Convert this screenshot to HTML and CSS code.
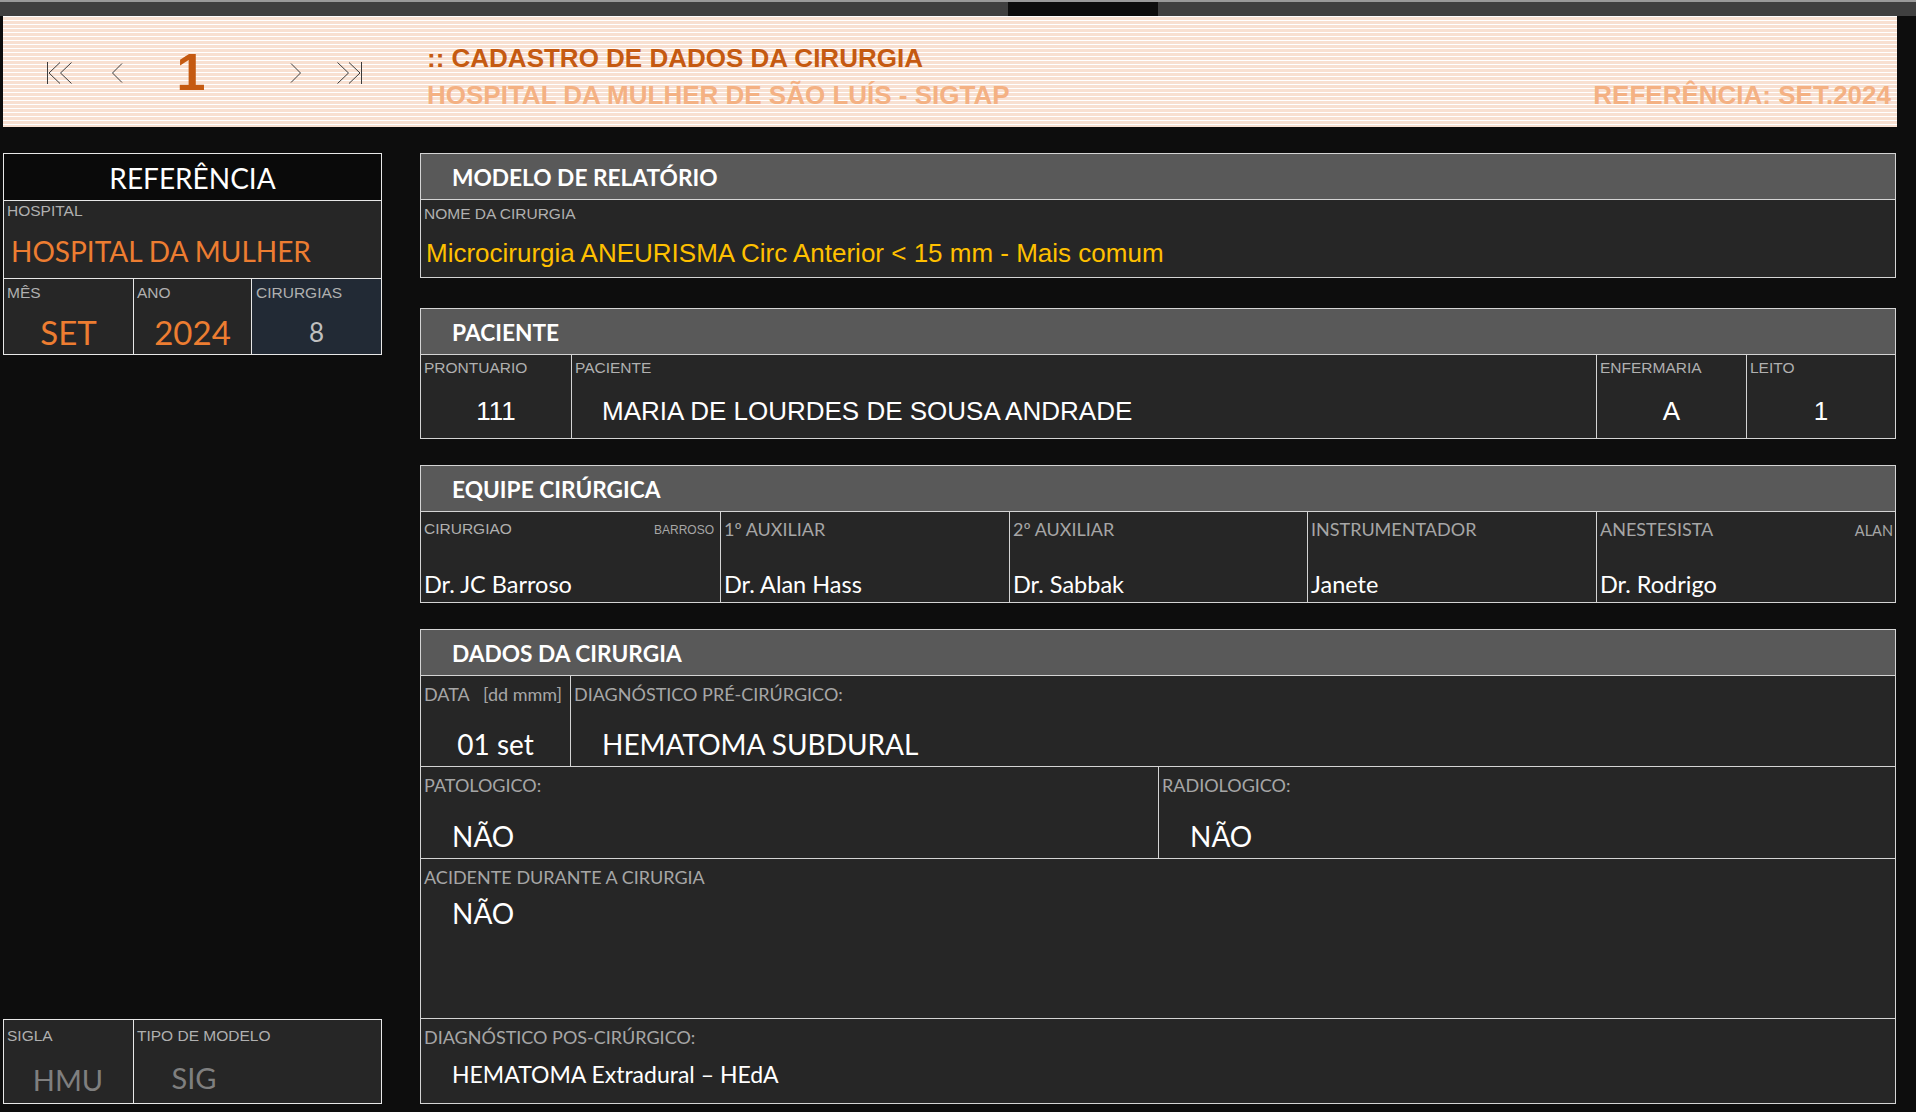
FILE: index.html
```html
<!DOCTYPE html>
<html lang="pt-BR">
<head>
<meta charset="utf-8">
<title>Cadastro de Dados da Cirurgia</title>
<link rel="stylesheet" href="styles.css">
</head>
<body>
<div class="topbar"><div class="tb-fill tb-a"></div><div class="tb-gap"></div><div class="tb-fill"></div></div>

<header class="banner">
  <nav class="pager">
    <svg class="ic ic-first" width="27" height="22" viewBox="0 0 27 22"><path d="M1.5 0V22M14 0.5L3 11L14 21.5M25.5 0.5L14.5 11L25.5 21.5" fill="none" stroke="#3c3c3c" stroke-width="1"/></svg>
    <svg class="ic ic-prev" width="12" height="20" viewBox="0 0 12 20"><path d="M11 0.5L1.5 10L11 19.5" fill="none" stroke="#3c3c3c" stroke-width="1"/></svg>
    <span class="page-num">1</span>
    <svg class="ic ic-next" width="12" height="20" viewBox="0 0 12 20"><path d="M1 0.5L10.5 10L1 19.5" fill="none" stroke="#3c3c3c" stroke-width="1"/></svg>
    <svg class="ic ic-last" width="27" height="22" viewBox="0 0 27 22"><path d="M25.5 0V22M13 0.5L24 11L13 21.5M1.5 0.5L12.5 11L1.5 21.5" fill="none" stroke="#3c3c3c" stroke-width="1"/></svg>
  </nav>
  <div class="titles">
    <div class="t1">:: CADASTRO DE DADOS DA CIRURGIA</div>
    <div class="t2row"><span class="t2">HOSPITAL DA MULHER DE SÃO LUÍS - SIGTAP</span><span class="t2">REFERÊNCIA: SET.2024</span></div>
  </div>
</header>

<div class="layout">
  <aside class="side">
    <div class="ref">
      <div class="ref-head">REFERÊNCIA</div>
      <div class="ref-hosp">
        <div class="lbl-a">HOSPITAL</div>
        <div class="hosp-val">HOSPITAL DA MULHER</div>
      </div>
      <div class="ref-row">
        <div class="rcell rc-mes"><div class="lbl-a">MÊS</div><div class="big-val">SET</div></div>
        <div class="rcell rc-ano"><div class="lbl-a">ANO</div><div class="big-val">2024</div></div>
        <div class="rcell rc-cir"><div class="lbl-a">CIRURGIAS</div><div class="cnt-val">8</div></div>
      </div>
    </div>
    <div class="sig">
      <div class="scell sc-sigla"><div class="lbl-a">SIGLA</div><div class="sig-val">HMU</div></div>
      <div class="scell sc-tipo"><div class="lbl-a">TIPO DE MODELO</div><div class="sig-val sig-tipo">SIG</div></div>
    </div>
  </aside>

  <main class="main">
    <section class="sec sec-modelo">
      <div class="sec-head">MODELO DE RELATÓRIO</div>
      <div class="row row-modelo">
        <div class="cell cell-full">
          <div class="lbl-a">NOME DA CIRURGIA</div>
          <div class="val-arial val-yellow">Microcirurgia ANEURISMA Circ Anterior &lt; 15 mm - Mais comum</div>
        </div>
      </div>
    </section>

    <section class="sec sec-pac">
      <div class="sec-head">PACIENTE</div>
      <div class="row row-pac">
        <div class="cell c-pront"><div class="lbl-a">PRONTUARIO</div><div class="val-arial val-pac center">111</div></div>
        <div class="cell c-nome"><div class="lbl-a">PACIENTE</div><div class="val-arial val-pac indent">MARIA DE LOURDES DE SOUSA ANDRADE</div></div>
        <div class="cell c-enf"><div class="lbl-a">ENFERMARIA</div><div class="val-arial val-pac center">A</div></div>
        <div class="cell c-leito"><div class="lbl-a">LEITO</div><div class="val-arial val-pac center">1</div></div>
      </div>
    </section>

    <section class="sec sec-equipe">
      <div class="sec-head">EQUIPE CIRÚRGICA</div>
      <div class="row row-equipe">
        <div class="cell c-eq c-eq1"><div class="lbl-line"><span class="lbl-a">CIRURGIAO</span><span class="tag-a">BARROSO</span></div><div class="val-eq">Dr. JC Barroso</div></div>
        <div class="cell c-eq c-eq2"><div class="lbl-line"><span class="lbl-c">1º AUXILIAR</span></div><div class="val-eq">Dr. Alan Hass</div></div>
        <div class="cell c-eq c-eq3"><div class="lbl-line"><span class="lbl-c">2º AUXILIAR</span></div><div class="val-eq">Dr. Sabbak</div></div>
        <div class="cell c-eq c-eq4"><div class="lbl-line"><span class="lbl-c">INSTRUMENTADOR</span></div><div class="val-eq">Janete</div></div>
        <div class="cell c-eq c-eq5"><div class="lbl-line"><span class="lbl-c">ANESTESISTA</span><span class="tag-c">ALAN</span></div><div class="val-eq">Dr. Rodrigo</div></div>
      </div>
    </section>

    <section class="sec sec-dados">
      <div class="sec-head">DADOS DA CIRURGIA</div>
      <div class="row row-d1">
        <div class="cell c-data"><div class="lbl-c">DATA&nbsp;&nbsp; [dd mmm]</div><div class="val-big center">01 set</div></div>
        <div class="cell c-diag"><div class="lbl-c">DIAGNÓSTICO PRÉ-CIRÚRGICO:</div><div class="val-big indent2">HEMATOMA SUBDURAL</div></div>
      </div>
      <div class="row row-d2">
        <div class="cell c-pato"><div class="lbl-c">PATOLOGICO:</div><div class="val-big indent2">NÃO</div></div>
        <div class="cell c-radio"><div class="lbl-c">RADIOLOGICO:</div><div class="val-big indent2">NÃO</div></div>
      </div>
      <div class="row row-d3">
        <div class="cell cell-full"><div class="lbl-c">ACIDENTE DURANTE A CIRURGIA</div><div class="val-big val-acid indent2">NÃO</div></div>
      </div>
      <div class="row row-d4">
        <div class="cell cell-full"><div class="lbl-c">DIAGNÓSTICO POS-CIRÚRGICO:</div><div class="val-pos indent2">HEMATOMA Extradural – HEdA</div></div>
      </div>
    </section>
  </main>
</div>
</body>
</html>
```

FILE: styles.css
```css
* { box-sizing: border-box; }

body {
  margin: 0;
  width: 1916px;
  height: 1112px;
  overflow: hidden;
  background: #0d0d0d;
  font-family: "Liberation Sans", Arial, sans-serif;
  color: #ffffff;
}

/* ---------- top strip ---------- */
.topbar {
  display: flex;
  height: 16px;
  border-top: 2px solid #9a9a9a;
}
.tb-fill { flex: 1; background: #404040; }
.tb-a { flex: 0 0 1008px; }
.tb-gap { flex: 0 0 150px; background: #0d0d0d; }

/* ---------- banner ---------- */
.banner {
  display: flex;
  align-items: flex-start;
  margin-left: 3px;
  width: 1894px;
  height: 111px;
  background: repeating-linear-gradient(180deg, #ffffff 0px, #ffffff 1.5px, #f8e0d1 1.5px, #f8e0d1 4px);
  padding-left: 43px;
}
.pager {
  display: flex;
  align-items: center;
  height: 111px;
}
.ic { display: block; }
.ic-first { margin-top: 2px; }
.ic-prev { margin-left: 38px; margin-top: 3px; }
.page-num {
  width: 60px;
  margin-left: 38px;
  text-align: center;
  font-family: "Liberation Sans", Arial, sans-serif;
  font-weight: bold;
  font-size: 52px;
  line-height: 52px;
  color: #c55a11;
}
.ic-next { margin-left: 69px; margin-top: 3px; }
.ic-last { margin-left: 34px; margin-top: 2px; }

.titles {
  flex: 1;
  margin-left: 64px;
  padding-top: 24px;
  padding-right: 6px;
  font-family: "Liberation Sans", Arial, sans-serif;
  font-weight: bold;
  font-size: 26px;
  line-height: 37px;
  white-space: nowrap;
}
.t1 { color: #c55a11; }
.t2row { display: flex; justify-content: space-between; align-items: baseline; }
.t2 { color: #f4b183; }

/* ---------- main layout ---------- */
.layout {
  display: flex;
  gap: 38px;
  margin-top: 26px;
  padding-left: 3px;
}

/* side */
.side {
  width: 379px;
  display: flex;
  flex-direction: column;
  justify-content: space-between;
}
.ref { border: 1px solid #e8e8e8; }
.ref-head {
  height: 47px;
  border-bottom: 1px solid #e8e8e8;
  background: #0a0a0a;
  display: flex;
  align-items: center;
  justify-content: center;
  font-family: Lato, "Open Sans", sans-serif;
  font-size: 28px;
  color: #ffffff;
  padding-top: 1px;
}
.lbl-a {
  font-family: "Liberation Sans", Arial, sans-serif;
  font-size: 15.5px;
  line-height: 15px;
  color: #b0b0b0;
  white-space: nowrap;
}
.ref-hosp {
  height: 78px;
  background: #262626;
  border-bottom: 1px solid #e8e8e8;
  padding: 2px 0 0 3px;
}
.hosp-val {
  margin-top: 19px;
  padding-left: 4px;
  font-family: Lato, "Open Sans", sans-serif;
  font-size: 28px;
  line-height: 29px;
  color: #ed7d31;
}
.ref-row {
  display: flex;
  height: 75px;
}
.rcell {
  background: #262626;
  padding: 6px 0 0 3px;
}
.rc-mes { width: 130px; border-right: 1px solid #e8e8e8; }
.rc-ano { width: 118px; border-right: 1px solid #e8e8e8; }
.rc-cir { flex: 1; background: #222a35; padding-left: 4px; }
.big-val {
  margin-top: 16px;
  text-align: center;
  padding-right: 3px;
  font-family: Lato, "Open Sans", sans-serif;
  font-size: 33px;
  line-height: 33px;
  color: #ed7d31;
}
.cnt-val {
  margin-top: 19px;
  text-align: center;
  padding-right: 4px;
  font-family: Lato, "Open Sans", sans-serif;
  font-size: 26px;
  line-height: 26px;
  color: #bfbfbf;
}
.sig {
  display: flex;
  height: 85px;
  border: 1px solid #e8e8e8;
  background: #262626;
}
.scell { padding: 8px 0 0 3px; }
.sc-sigla { width: 130px; border-right: 1px solid #e8e8e8; }
.sc-tipo { flex: 1; }
.sig-val {
  margin-top: 22px;
  text-align: center;
  padding-right: 4px;
  font-family: Lato, "Open Sans", sans-serif;
  font-size: 29px;
  line-height: 29px;
  color: #7f7f7f;
}
.sig-tipo { width: 118px; margin-top: 20px; }

/* main */
.main {
  width: 1476px;
  display: flex;
  flex-direction: column;
}
.sec {
  border: 1px solid #d4d4d4;
  background: #262626;
}
.sec-pac { margin-top: 30px; }
.sec-equipe { margin-top: 26px; }
.sec-dados { margin-top: 26px; }
.sec-head {
  height: 46px;
  background: #595959;
  border-bottom: 1px solid #d4d4d4;
  display: flex;
  align-items: center;
  padding-left: 31px;
  padding-top: 1px;
  font-family: Lato, "Open Sans", sans-serif;
  font-weight: bold;
  font-size: 22.7px;
  color: #ffffff;
}
.row { display: flex; }
.cell { padding: 6px 0 0 3px; }
.cell-full { flex: 1; }
.row-modelo { height: 77px; }
.row-pac { height: 83px; }
.row-pac .cell { padding-top: 5px; }
.row-equipe { height: 90px; }
.c-pront { width: 151px; border-right: 1px solid #d4d4d4; }
.c-nome { width: 1025px; border-right: 1px solid #d4d4d4; }
.c-enf { width: 150px; border-right: 1px solid #d4d4d4; }
.c-leito { flex: 1; }

.val-arial {
  font-family: "Liberation Sans", Arial, sans-serif;
  white-space: nowrap;
}
.val-yellow {
  margin-top: 19px;
  padding-left: 2px;
  font-size: 26px;
  line-height: 26px;
  color: #ffc000;
}
.val-pac {
  margin-top: 23px;
  font-size: 26px;
  line-height: 26px;
  color: #ffffff;
}
.center { text-align: center; padding-right: 3px; }
.indent { padding-left: 27px; }

.lbl-c {
  font-family: Lato, "Open Sans", sans-serif;
  font-size: 18px;
  line-height: 18px;
  color: #a6a6a6;
  white-space: nowrap;
}
.c-eq { padding-top: 8px; border-right: 1px solid #d4d4d4; }
.c-eq1 { width: 300px; padding-right: 6px; }
.c-eq2 { width: 289px; }
.c-eq3 { width: 298px; }
.c-eq4 { width: 289px; }
.c-eq5 { flex: 1; border-right: 0; padding-right: 2px; }
.lbl-line {
  display: flex;
  justify-content: space-between;
  align-items: baseline;
  height: 18px;
  line-height: 18px;
}
.lbl-line .lbl-a { line-height: 18px; }
.tag-a {
  font-family: "Liberation Sans", Arial, sans-serif;
  font-size: 12px;
  color: #a6a6a6;
}
.tag-c {
  font-family: Lato, "Open Sans", sans-serif;
  font-size: 14.5px;
  color: #a6a6a6;
}
.val-eq {
  margin-top: 34px;
  font-family: Lato, "Open Sans", sans-serif;
  font-size: 23.5px;
  line-height: 24px;
  color: #ffffff;
  white-space: nowrap;
}

.row-d1 { height: 91px; border-bottom: 1px solid #d4d4d4; }
.row-d2 { height: 92px; border-bottom: 1px solid #d4d4d4; }
.row-d3 { height: 160px; border-bottom: 1px solid #d4d4d4; }
.row-d4 { height: 84px; }
.row-d1 .cell, .row-d3 .cell, .row-d4 .cell { padding-top: 9px; }
.row-d2 .cell { padding-top: 9px; }
.c-data { width: 150px; border-right: 1px solid #d4d4d4; }
.c-diag { flex: 1; }
.c-pato { width: 738px; border-right: 1px solid #d4d4d4; }
.c-radio { flex: 1; }
.val-big {
  margin-top: 27px;
  font-family: Lato, "Open Sans", sans-serif;
  font-size: 28px;
  line-height: 28px;
  color: #ffffff;
  white-space: nowrap;
}
.row-d2 .val-big { margin-top: 28px; }
.val-acid { margin-top: 13px; }
.indent2 { padding-left: 28px; }
.val-pos {
  margin-top: 17px;
  font-family: Lato, "Open Sans", sans-serif;
  font-size: 23px;
  line-height: 23px;
  color: #ffffff;
  white-space: nowrap;
}
```
